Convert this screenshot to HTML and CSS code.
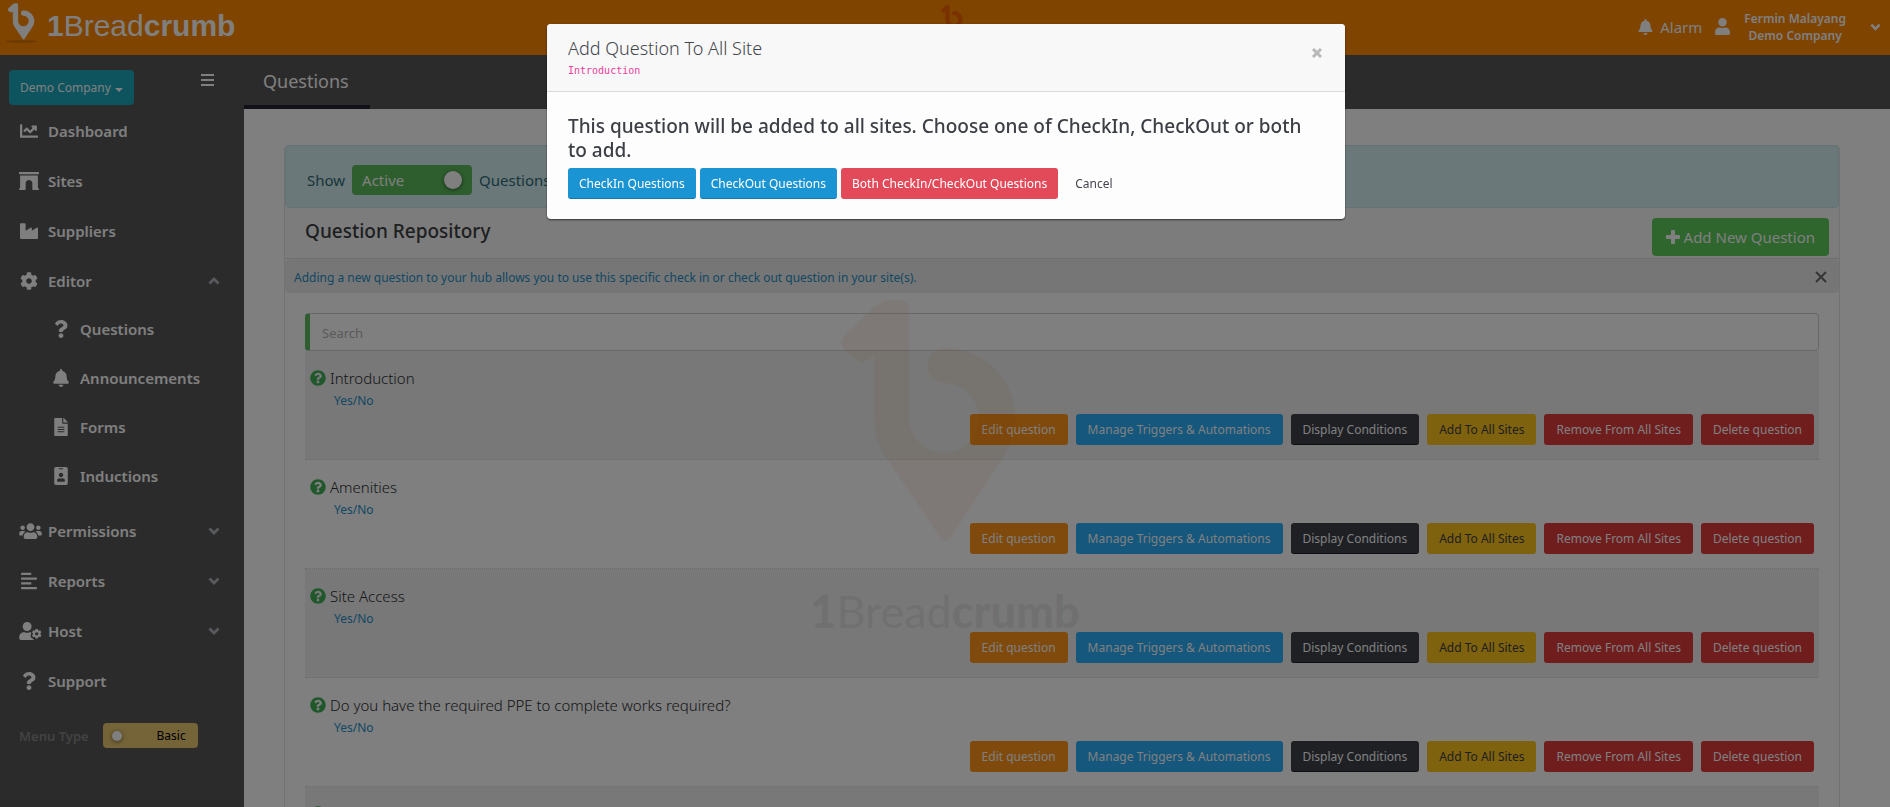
FILE: index.html
```html
<!DOCTYPE html>
<html lang="en">
<head>
<meta charset="utf-8">
<title>Questions - 1Breadcrumb</title>
<link rel="stylesheet" href="styles.css">
</head>
<body>
<svg class="defs" aria-hidden="true">
  <defs>
    <symbol id="pin" viewBox="0 0 176 244"><path d="M42 3Q46 1 50 1H60Q69 1 69 10V119A35 35 0 1 0 105 84A17 17 0 0 1 105 49A70 70 0 0 1 164 157L111 238Q105 245 100 238L45 157Q34 140 34 119V56L29 60Q22 67 14 59L3 49Q-1 43 4 37L35 7Z"/></symbol>
    <symbol id="chart" viewBox="0 0 512 512"><path d="M496 384H64V80c0-8.800-7.200-16-16-16H16C7.200 64 0 71.200 0 80v336c0 17.700 14.300 32 32 32h464c8.800 0 16-7.200 16-16v-32c0-8.800-7.200-16-16-16zM464 96H345.900c-21.400 0-32.100 25.900-17 41l32.400 32.400L288 242.700l-73.400-73.400c-12.500-12.500-32.800-12.500-45.300 0l-68.700 68.700c-6.200 6.200-6.200 16.400 0 22.600l22.600 22.600c6.200 6.200 16.400 6.200 22.600 0L192 237.300l73.400 73.400c12.500 12.500 32.800 12.500 45.300 0l96-96 32.400 32.400c15.100 15.100 41 4.400 41-17V112c-.1-8.800-7.200-16-16.100-16z"/></symbol>
    <symbol id="arch" viewBox="0 0 576 512"><path d="M560 0H16C7 0 0 7 0 16v32c0 9 7 16 16 16h544c9 0 16-7 16-16V16c0-9-7-16-16-16zM32 96v368H16c-9 0-16 7-16 16v16c0 9 7 16 16 16h160c9 0 16-7 16-16V320c0-53 43-96 96-96s96 43 96 96v176c0 9 7 16 16 16h160c9 0 16-7 16-16v-16c0-9-7-16-16-16h-16V96z"/></symbol>
    <symbol id="industry" viewBox="0 0 512 512"><path d="M475.100 163.800L336 252.300v-68.300c0-18.900-20.900-30.400-36.900-20.200L160 252.300V56c0-13.300-10.700-24-24-24H24C10.700 32 0 42.700 0 56v400c0 13.300 10.700 24 24 24h464c13.300 0 24-10.700 24-24V184c0-18.900-20.900-30.400-36.900-20.200z"/></symbol>
    <symbol id="cog" viewBox="0 0 512 512"><path d="M487.400 315.700l-42.600-24.600c4.300-23.200 4.300-47 0-70.200l42.600-24.600c4.900-2.800 7.100-8.600 5.500-14-11.100-35.600-30-67.800-54.700-94.600-3.800-4.100-10-5.100-14.800-2.300L380.800 110c-17.900-15.400-38.500-27.300-60.800-35.100V25.800c0-5.600-3.900-10.500-9.400-11.700-36.700-8.200-74.300-7.800-109.200 0-5.500 1.200-9.400 6.100-9.400 11.700V75c-22.200 7.900-42.800 19.800-60.800 35.100L88.700 85.500c-4.900-2.800-11-1.900-14.800 2.300-24.700 26.700-43.600 58.900-54.700 94.600-1.700 5.400.6 11.200 5.500 14L67.300 221c-4.300 23.200-4.300 47 0 70.200l-42.600 24.600c-4.900 2.800-7.100 8.600-5.500 14 11.100 35.600 30 67.800 54.700 94.600 3.800 4.100 10 5.100 14.800 2.300l42.600-24.600c17.900 15.400 38.500 27.300 60.800 35.100v49.200c0 5.600 3.900 10.500 9.400 11.700 36.700 8.200 74.300 7.800 109.200 0 5.500-1.200 9.400-6.100 9.400-11.700v-49.200c22.200-7.900 42.800-19.800 60.800-35.100l42.600 24.600c4.900 2.800 11 1.900 14.800-2.300 24.700-26.700 43.600-58.900 54.700-94.600 1.500-5.500-.7-11.300-5.600-14.100zM256 336c-44.100 0-80-35.900-80-80s35.900-80 80-80 80 35.900 80 80-35.900 80-80 80z"/></symbol>
    <symbol id="question" viewBox="0 0 384 512"><path d="M202 0C122.500 0 69.700 32.500 28.300 90.500c-7.500 10.500-5.200 25.100 5.100 32.900l43.100 32.700c10.400 7.900 25.100 6 33.300-4.100 25-31.400 43.600-49.400 82.800-49.400 30.800 0 68.800 19.800 68.800 49.600 0 22.600-18.600 34.200-49 51.200-35.400 19.900-82.300 44.600-82.300 106.400V320c0 13.300 10.700 24 24 24h72.500c13.300 0 24-10.700 24-24v-5.800c0-42.900 125.300-44.600 125.300-160.600C375.900 66.300 285.300 0 202 0zM192 373.500c-38.200 0-69.300 31.100-69.300 69.200C122.700 480.900 153.800 512 192 512s69.300-31.100 69.300-69.300-31.100-69.200-69.300-69.200z"/></symbol>
    <symbol id="bell" viewBox="0 0 448 512"><path d="M224 512c35.300 0 63.900-28.600 63.900-64H160.100c0 35.400 28.600 64 63.900 64zm215.400-149.700c-19.300-20.800-55.500-52-55.500-154.300 0-77.700-54.500-139.900-127.900-155.200V32c0-17.700-14.300-32-32-32s-32 14.300-32 32v20.800C118.600 68.100 64.100 130.300 64.100 208c0 102.300-36.200 133.500-55.500 154.300-6 6.400-8.700 14.100-8.600 21.700.1 16.400 13 32 32.100 32h383.800c19.100 0 32-15.600 32.100-32 .1-7.600-2.600-15.300-8.600-21.700z"/></symbol>
    <symbol id="file" viewBox="0 0 384 512"><path fill-rule="evenodd" d="M224 136V0H24C10.700 0 0 10.700 0 24v464c0 13.300 10.700 24 24 24h336c13.300 0 24-10.700 24-24V160H248c-13.200 0-24-10.800-24-24zM288 396c0 6.600-5.400 12-12 12H108c-6.600 0-12-5.400-12-12v-8c0-6.600 5.400-12 12-12h168c6.600 0 12 5.400 12 12zm0-64c0 6.600-5.400 12-12 12H108c-6.600 0-12-5.400-12-12v-8c0-6.600 5.400-12 12-12h168c6.600 0 12 5.400 12 12zm0-72v8c0 6.600-5.400 12-12 12H108c-6.600 0-12-5.400-12-12v-8c0-6.600 5.400-12 12-12h168c6.600 0 12 5.400 12 12zM384 122v6H256V0h6c6.400 0 12.500 2.500 17 7l98 98c4.500 4.500 7 10.600 7 17z"/></symbol>
    <symbol id="badge" viewBox="0 0 384 512"><path fill-rule="evenodd" d="M336 0H48C21.500 0 0 21.500 0 48v416c0 26.500 21.500 48 48 48h288c26.500 0 48-21.500 48-48V48c0-26.500-21.500-48-48-48zM144 32h96c8.800 0 16 7.200 16 16s-7.200 16-16 16h-96c-8.800 0-16-7.200-16-16s7.200-16 16-16zm48 128c35.300 0 64 28.700 64 64s-28.700 64-64 64-64-28.700-64-64 28.700-64 64-64zm112 236.800c0 10.600-10 19.200-22.400 19.200H102.400C90 416 80 407.400 80 396.800v-19.200c0-31.800 30.100-57.600 67.200-57.600h5c24.900 10.300 54.600 10.300 79.600 0h5c37.100 0 67.200 25.800 67.200 57.600z"/></symbol>
    <symbol id="users" viewBox="0 0 640 512"><path d="M96 224c35.300 0 64-28.700 64-64s-28.700-64-64-64-64 28.700-64 64 28.700 64 64 64zm448 0c35.300 0 64-28.700 64-64s-28.700-64-64-64-64 28.700-64 64 28.700 64 64 64zm32 32h-64c-17.600 0-33.500 7.100-45.100 18.600 40.300 22.100 68.900 62 75.100 109.400h66c17.700 0 32-14.300 32-32v-32c0-35.300-28.700-64-64-64zm-256 0c61.900 0 112-50.100 112-112S381.900 32 320 32 208 82.100 208 144s50.100 112 112 112zm76.800 32h-8.300c-20.800 10-43.900 16-68.500 16s-47.600-6-68.500-16h-8.300C179.600 288 128 339.600 128 403.200V432c0 26.500 21.500 48 48 48h288c26.500 0 48-21.500 48-48v-28.800c0-63.600-51.600-115.200-115.200-115.200zm-223.700-13.400C161.500 263.100 145.600 256 128 256H64c-35.300 0-64 28.700-64 64v32c0 17.700 14.300 32 32 32h65.900c6.300-47.400 34.900-87.300 75.200-109.400z"/></symbol>
    <symbol id="bars-left" viewBox="0 0 448 512"><path d="M0 20h288v64H0zM0 156h448v64H0zM0 292h288v64H0zM0 428h448v64H0z"/></symbol>
    <symbol id="user" viewBox="0 0 448 512"><path d="M224 256c70.700 0 128-57.300 128-128S294.700 0 224 0 96 57.300 96 128s57.300 128 128 128zm89.600 32h-16.700c-22.200 10.200-46.900 16-72.900 16s-50.600-5.800-72.900-16h-16.700C60.200 288 0 348.200 0 422.400V464c0 26.500 21.500 48 48 48h352c26.500 0 48-21.500 48-48v-41.600c0-74.200-60.200-134.400-134.400-134.400z"/></symbol>
    <symbol id="user-cog" viewBox="0 0 640 512"><path d="M224 256c70.700 0 128-57.300 128-128S294.700 0 224 0 96 57.300 96 128s57.300 128 128 128zM134 288C60 288 0 348 0 422v42c0 26 21 48 48 48h352c8 0 15-2 22-5-16-10-30-20-36-30l-40-24-28-64 24-60-4-38c-8-2-16-3-24-3h-17c-45 21-101 21-146 0z"/><path fill-rule="evenodd" d="M462 198h68l7 38 24 14 36-13 34 59-29 25v28l29 25-34 59-36-13-24 14-7 38h-68l-7-38-24-14-36 13-34-59 29-25v-28l-29-25 34-59 36 13 24-14zm34 90a47 47 0 1 0 0 94a47 47 0 1 0 0-94z"/></symbol>
    <symbol id="chevron" viewBox="0 0 12 8"><path d="M1.500 1.500L6 6L10.500 1.500" fill="none" stroke="currentColor" stroke-width="2.800"/></symbol>
    <symbol id="help" viewBox="0 0 512 512"><path d="M504 256c0 137-111 248-248 248S8 393 8 256C8 119.100 119 8 256 8s248 111.100 248 248zM262.700 90c-54.500 0-89.300 23-116.500 63.800-3.500 5.300-2.400 12.400 2.700 16.300l34.700 26.300c5.200 3.900 12.600 3 16.700-2.100 17.900-22.700 30.100-35.800 57.300-35.800 20.400 0 45.700 13.100 45.700 33 0 15-12.400 22.700-32.500 34C247.100 238.500 216 254.900 216 296v4c0 6.600 5.400 12 12 12h56c6.600 0 12-5.400 12-12v-1.300c0-28.500 83.200-29.600 83.200-106.700 0-58-60.200-102-116.500-102zM256 338c-25.400 0-46 20.600-46 46s20.600 46 46 46 46-20.600 46-46-20.600-46-46-46z"/></symbol>
    <symbol id="plus" viewBox="0 0 14 14"><path d="M5 1Q5 0 6 0H8Q9 0 9 1V5H13Q14 5 14 6V8Q14 9 13 9H9V13Q9 14 8 14H6Q5 14 5 13V9H1Q0 9 0 8V6Q0 5 1 5H5Z"/></symbol>
    <symbol id="cross" viewBox="0 0 12 12"><path d="M1 1L11 11M11 1L1 11" fill="none" stroke="currentColor" stroke-width="2"/></symbol>
    <symbol id="cross-bold" viewBox="0 0 12 12"><path d="M2 2L10 10M10 2L2 10" fill="none" stroke="currentColor" stroke-width="3"/></symbol>
  </defs>
</svg>

<div class="app">
  <header class="topbar">
    <a class="brand" href="#">
      <span class="brand-mark"><svg class="brand-pin"><use href="#pin"/></svg></span>
      <span class="brand-name"><b>1</b>Bread<b>crumb</b></span>
    </a>
    <svg class="topbar-loader" aria-hidden="true"><use href="#pin"/></svg>
    <div class="account">
      <a class="alarm" href="#"><svg class="icon-bell"><use href="#bell"/></svg>Alarm</a>
      <button class="user" type="button">
        <svg class="icon-user"><use href="#user"/></svg>
        <span class="user-name">Fermin Malayang<br>Demo Company</span>
        <svg class="user-chevron"><use href="#chevron"/></svg>
      </button>
    </div>
  </header>

  <div class="columns">
    <nav class="sidebar">
      <div class="sidebar-top">
        <button class="company" type="button">Demo Company<span class="caret"></span></button>
        <button class="menu-button" type="button" aria-label="Collapse menu"><span></span><span></span><span></span></button>
      </div>
      <ul class="nav">
        <li><a class="nav-link" href="#"><svg><use href="#chart"/></svg>Dashboard</a></li>
        <li><a class="nav-link" href="#"><svg><use href="#arch"/></svg>Sites</a></li>
        <li><a class="nav-link" href="#"><svg><use href="#industry"/></svg>Suppliers</a></li>
        <li><a class="nav-link nav-open" href="#"><svg><use href="#cog"/></svg>Editor<svg class="chev up"><use href="#chevron"/></svg></a>
          <ul class="subnav">
            <li><a class="nav-link" href="#"><svg><use href="#question"/></svg>Questions</a></li>
            <li><a class="nav-link" href="#"><svg><use href="#bell"/></svg>Announcements</a></li>
            <li><a class="nav-link" href="#"><svg><use href="#file"/></svg>Forms</a></li>
            <li><a class="nav-link" href="#"><svg><use href="#badge"/></svg>Inductions</a></li>
          </ul>
        </li>
        <li><a class="nav-link" href="#"><svg class="wide"><use href="#users"/></svg>Permissions<svg class="chev"><use href="#chevron"/></svg></a></li>
        <li><a class="nav-link" href="#"><svg><use href="#bars-left"/></svg>Reports<svg class="chev"><use href="#chevron"/></svg></a></li>
        <li><a class="nav-link" href="#"><svg class="wide"><use href="#user-cog"/></svg>Host<svg class="chev"><use href="#chevron"/></svg></a></li>
        <li><a class="nav-link" href="#"><svg><use href="#question"/></svg>Support</a></li>
      </ul>
      <div class="menu-type">
        <label for="menu-type">Menu Type</label>
        <label class="switch switch-basic"><input id="menu-type" type="checkbox"><span class="knob"></span><span>Basic</span></label>
      </div>
    </nav>

    <main class="main">
      <div class="tabs"><a class="tab" href="#">Questions</a></div>
      <section class="card">
        <div class="filter">
          <span>Show</span>
          <label class="switch switch-active"><input type="checkbox" checked><span>Active</span><span class="knob"></span></label>
          <span>Questions</span>
        </div>
        <div class="card-head">
          <h1>Question Repository</h1>
          <button class="add" type="button"><svg><use href="#plus"/></svg>Add New Question</button>
        </div>
        <div class="hint">
          <span>Adding a new question to your hub allows you to use this specific check in or check out question in your site(s).</span>
          <button type="button" aria-label="Dismiss"><svg><use href="#cross"/></svg></button>
        </div>
        <div class="card-body">
          <input class="search" type="text" placeholder="Search" aria-label="Search">
          <ul class="questions">
            <li class="question">
              <div class="q-title"><svg><use href="#help"/></svg>Introduction</div>
              <a class="q-type" href="#">Yes/No</a>
              <div class="q-actions"><button class="btn orange">Edit question</button><button class="btn blue">Manage Triggers &amp; Automations</button><button class="btn dark">Display Conditions</button><button class="btn yellow">Add To All Sites</button><button class="btn red">Remove From All Sites</button><button class="btn red">Delete question</button></div>
            </li>
            <li class="question">
              <div class="q-title"><svg><use href="#help"/></svg>Amenities</div>
              <a class="q-type" href="#">Yes/No</a>
              <div class="q-actions"><button class="btn orange">Edit question</button><button class="btn blue">Manage Triggers &amp; Automations</button><button class="btn dark">Display Conditions</button><button class="btn yellow">Add To All Sites</button><button class="btn red">Remove From All Sites</button><button class="btn red">Delete question</button></div>
            </li>
            <li class="question">
              <div class="q-title"><svg><use href="#help"/></svg>Site Access</div>
              <a class="q-type" href="#">Yes/No</a>
              <div class="q-actions"><button class="btn orange">Edit question</button><button class="btn blue">Manage Triggers &amp; Automations</button><button class="btn dark">Display Conditions</button><button class="btn yellow">Add To All Sites</button><button class="btn red">Remove From All Sites</button><button class="btn red">Delete question</button></div>
            </li>
            <li class="question">
              <div class="q-title"><svg><use href="#help"/></svg>Do you have the required PPE to complete works required?</div>
              <a class="q-type" href="#">Yes/No</a>
              <div class="q-actions"><button class="btn orange">Edit question</button><button class="btn blue">Manage Triggers &amp; Automations</button><button class="btn dark">Display Conditions</button><button class="btn yellow">Add To All Sites</button><button class="btn red">Remove From All Sites</button><button class="btn red">Delete question</button></div>
            </li>
            <li class="question">
              <div class="q-title"><svg><use href="#help"/></svg></div>
            </li>
          </ul>
        </div>
      </section>
    </main>
  </div>

  <div class="watermark" aria-hidden="true">
    <svg class="watermark-pin"><use href="#pin"/></svg>
    <span class="watermark-name"><b>1</b>Bread<b>crumb</b></span>
  </div>
</div>

<div class="backdrop">
  <div class="modal" role="dialog" aria-modal="true" aria-labelledby="modal-title">
    <div class="modal-head">
      <div>
        <h2 id="modal-title">Add Question To All Site</h2>
        <code>Introduction</code>
      </div>
      <button class="modal-close" type="button" aria-label="Close"><svg><use href="#cross-bold"/></svg></button>
    </div>
    <div class="modal-body">
      <p>This question will be added to all sites. Choose one of CheckIn, CheckOut or both to add.</p>
      <div class="modal-actions">
        <button class="btn primary">CheckIn Questions</button>
        <button class="btn primary">CheckOut Questions</button>
        <button class="btn danger">Both CheckIn/CheckOut Questions</button>
        <button class="btn plain">Cancel</button>
      </div>
    </div>
  </div>
</div>
</body>
</html>
```
FILE: styles.css
```css
* { box-sizing: border-box; }
body {
  margin: 0;
  font-family: "Noto Sans", "Open Sans", sans-serif;
  font-size: 15px;
  color: #3c4048;
  background: #fff;
}
ul { list-style: none; margin: 0; padding: 0; }
a { color: inherit; text-decoration: none; }
button { font: inherit; color: inherit; border: 0; background: none; padding: 0; cursor: pointer; }
svg { fill: currentColor; flex: none; }
.defs { position: absolute; width: 0; height: 0; }

.app { position: relative; height: 100vh; overflow: hidden; display: flex; flex-direction: column; }

/* top bar */
.topbar {
  position: relative;
  flex: none;
  height: 55px;
  display: flex;
  justify-content: space-between;
  background: #ff8800;
  color: #fff;
}
.brand { display: flex; gap: 12px; padding: 3px 0 0 7px; }
.brand-mark { display: flex; flex-direction: column; align-items: center; width: 28px; }
.brand-mark::after { content: ""; width: 32px; height: 3px; border-radius: 50%; background: #d97400; }
.brand-pin { width: 28px; height: 37px; }
.brand-name { font: 30px/46px "Liberation Sans", Arial, sans-serif; }
.topbar-loader { position: absolute; left: 50%; top: 5px; width: 22px; height: 30px; margin-left: -4px; color: #ee4a00; opacity: .6; }
.account { display: flex; align-items: center; gap: 13px; padding: 0 9px 2px 0; }
.alarm { display: flex; align-items: center; gap: 7px; }
.icon-bell { width: 15px; height: 16px; }
.user { display: flex; align-items: center; gap: 14px; }
.icon-user { width: 15px; height: 17px; }
.user-name { font-size: 12px; line-height: 17px; font-weight: 600; text-align: center; }
.user-chevron { width: 11px; height: 8px; margin-left: 10px; }

.columns { flex: 1; display: flex; min-height: 0; }

/* sidebar */
.sidebar { flex: none; width: 244px; background: #575757; color: #fff; }
.sidebar-top { display: flex; justify-content: space-between; align-items: flex-start; padding: 15px 30px 1px 9px; }
.company { height: 35px; padding: 0 11px; border-radius: 4px; background: #1aa8bd; font-size: 12px; }
.caret { display: inline-block; margin-left: 4px; border: 4px solid transparent; border-top-color: #fff; border-bottom: 0; vertical-align: 0; }
.menu-button { display: grid; gap: 3px; width: 13px; margin-top: 4px; }
.menu-button span { height: 2px; background: #fff; }
.nav-link { display: flex; align-items: center; gap: 9px; height: 50px; padding: 0 24px 0 19px; font-weight: 600; font-size: 15px; }
.nav-link svg { width: 20px; height: 18px; }
.nav-link svg.wide { width: 23px; margin-right: -3px; }
.nav-link svg.chev { width: 12px; height: 8px; margin-left: auto; color: #b0b4bc; }
.nav-link svg.up { transform: rotate(180deg); }
.nav-open { height: 48px; padding-top: 2px; }
.subnav { padding-bottom: 6px; }
.subnav .nav-link { height: 49px; padding-left: 51px; }
.menu-type { display: flex; align-items: center; gap: 14px; padding: 17px 19px; font-size: 13px; font-weight: 600; color: #858585; }

/* switches */
.switch { display: flex; align-items: center; justify-content: space-between; border-radius: 4px; }
.switch input { position: absolute; opacity: 0; pointer-events: none; }
.knob { border-radius: 50%; background: #fff; box-shadow: 0 1px 4px rgba(0, 0, 0, .5); }
.switch-basic { width: 95px; height: 25px; padding: 0 12px 0 9px; background: #e8c870; color: #000; font-size: 12px; font-weight: 400; }
.switch-basic .knob { width: 10px; height: 10px; }
.switch-active { width: 120px; height: 30px; padding: 0 10px; background: #5cbc5c; color: #fff; }
.switch-active .knob { width: 18px; height: 18px; }

/* main area */
.main { flex: 1; min-width: 0; }
.tabs { display: flex; height: 54px; background: #575757; color: #fff; }
.tab { padding: 12px 21px 0 19px; border-bottom: 4px solid #242230; font-size: 18px; line-height: 28px; }
.card { margin: 36px 50px 0 40px; border: 1px solid #e4e4e4; border-top: 0; border-radius: 5px; }
.filter { display: flex; align-items: center; gap: 7px; height: 63px; padding: 6px 21px 0; border: 1px solid #c6e5ea; border-radius: 4px; background: #d7f0f4; color: #2f6a76; }
.card-head { display: flex; justify-content: space-between; align-items: flex-start; height: 51px; padding: 10px 10px 0 20px; border-bottom: 1px solid #dcdcdc; background: #f8f8f8; }
.card-head h1 { margin: 0; font-size: 19px; line-height: 26px; font-weight: 500; color: #3c3e42; }
.add { display: flex; align-items: center; gap: 4px; height: 38px; padding: 0 14px; border-radius: 4px; background: #5ecc5c; color: #fff; }
.add svg { width: 14px; height: 14px; }
.hint { display: flex; justify-content: space-between; align-items: center; height: 34px; padding: 2px 12px 0 9px; border-radius: 4px; background: #ededed; color: #2590c8; font-size: 12px; }
.hint button { color: #6c6c6c; display: flex; }
.hint svg { width: 12px; height: 12px; }
.card-body { padding: 20px 20px 0; }
.search { display: block; width: 100%; height: 38px; padding: 2px 12px 0; border: 1px solid #d0d0d4; border-left: 5px solid #5cbc5c; border-radius: 4px; font: inherit; font-size: 13px; background: #fff; }
.search::placeholder { color: #b4b4b4; opacity: 1; }
.question { height: 109px; padding: 15px 5px 0; border-bottom: 1px dotted #d4d4d4; }
.question:nth-child(odd) { background: #f1f1f1; }
.q-title { display: flex; align-items: center; gap: 4px; height: 24px; font-weight: 300; color: #2b2d31; }
.q-title svg { width: 16px; height: 16px; color: #40b058; }
.q-type { display: block; padding: 1px 0 0 24px; font-size: 12px; line-height: 20px; color: #2590c8; }
.q-actions { display: flex; justify-content: flex-end; gap: 8px; padding-top: 3px; }
.btn { height: 31px; padding: 0 12px; border-radius: 3px; font-size: 12px; color: #fff; white-space: nowrap; }
.orange { background: #ff9418; }
.blue { background: #2aaefa; }
.dark { background: #3c4048; border-bottom: 1px solid #1c1e26; }
.yellow { background: #ffc41c; color: #3c3e42; }
.red { background: #e03a3c; }

/* watermark lies across the page */
.watermark { position: absolute; left: 50%; top: 299px; width: 272px; margin-left: -136px; display: flex; flex-direction: column; align-items: center; pointer-events: none; }
.watermark-pin { width: 176px; height: 244px; margin-right: 34px; color: #e07820; opacity: .08; }
.watermark-name { margin-top: 38px; font: 400 45px/60px Lato, sans-serif; color: #222; opacity: .07; }
.watermark-name b { font-weight: 900; }

/* modal */
.backdrop { position: fixed; inset: 0; display: flex; justify-content: center; align-items: flex-start; padding: 24px 0 0 2px; background: rgba(0, 0, 0, .5); }
.modal { width: 798px; max-width: 95%; border-radius: 4px; background: #fdfdfd; box-shadow: 0 1px 2px rgba(0, 0, 0, .6); overflow: hidden; }
.modal-head { display: flex; justify-content: space-between; align-items: flex-start; height: 68px; padding: 11px 22px 0 21px; border-bottom: 1px solid #dadada; background: #f8f8f8; }
.modal-head h2 { margin: 0; font-size: 18px; line-height: 26px; font-weight: 300; color: #44464e; }
.modal-head code { display: block; padding-top: 1px; font: 10px/18px "DejaVu Sans Mono", monospace; color: #e83e9c; }
.modal-close { display: flex; margin-top: 12px; color: #b8b8b8; }
.modal-close svg { width: 12px; height: 12px; }
.modal-body { padding: 22px 21px 20px; }
.modal-body p { margin: 0 0 6px; font-size: 19px; line-height: 24px; font-weight: 500; color: #3c4046; }
.modal-actions { display: flex; gap: 4px; }
.modal-actions .btn { padding: 0 11px; }
.modal-actions .primary { background: #1a94d2; border-bottom: 1px solid #1478ac; }
.modal-actions .danger { background: #e24a5a; }
.modal-actions .plain { padding-left: 13px; color: #44464e; }
```
